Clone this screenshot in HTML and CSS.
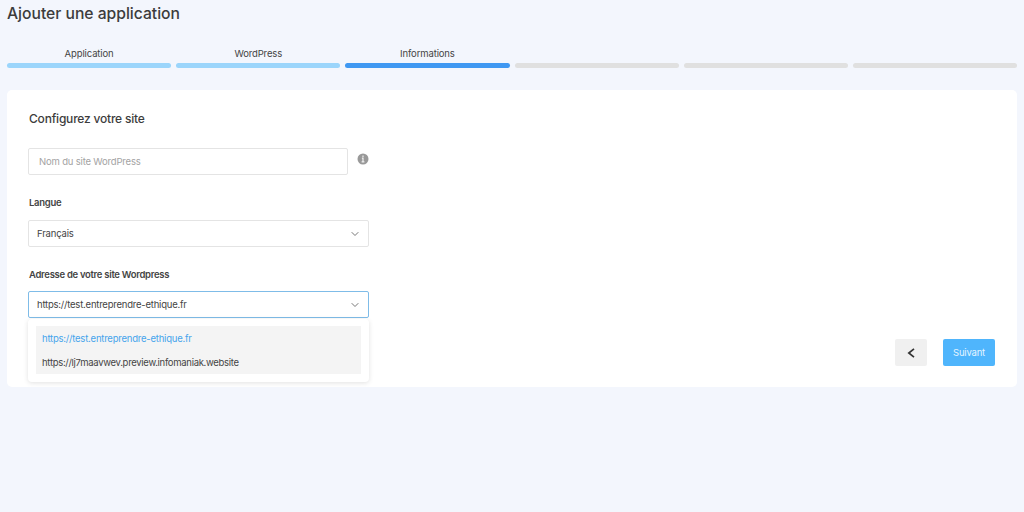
FILE: index.html
```html
<!DOCTYPE html>
<html lang="fr">

<head>
  <meta charset="UTF-8">
  <meta name="viewport" content="width=device-width, initial-scale=1.0">
  <title>Ajouter une application</title>
  <link rel="stylesheet" href="styles.css">
</head>

<body>
  <div class="page">
    <h1>Ajouter une application</h1>

    <!-- Étapes -->
    <ol class="steps">
      <li class="step done"><span>Application</span></li>
      <li class="step done"><span>WordPress</span></li>
      <li class="step current"><span>Informations</span></li>
      <li class="step"></li>
      <li class="step"></li>
      <li class="step"></li>
    </ol>

    <main class="card">
      <form class="site-form">
        <h2>Configurez votre site</h2>

        <div class="name-row">
          <input class="field" type="text" placeholder="Nom du site WordPress">
          <svg class="info" viewBox="0 0 12 12">
            <circle cx="6" cy="6" r="5.5" fill="#999" />
            <path d="M6 2.4v1.5M4.9 5.2H6v3.500M4.600 8.800h2.800" fill="none" stroke="#fff" stroke-opacity="0.850" stroke-width="1.200" />
          </svg>
        </div>

        <div class="label">Langue</div>
        <div class="field select">
          <span>Français</span>
          <svg class="chevron" viewBox="0 0 8 6"><path d="M.7 1.2L4 4.500l3.300-3.300" /></svg>
        </div>

        <div class="label label-address">Adresse de votre site Wordpress</div>
        <div class="field select open">
          <span class="url">https://test.entreprendre-ethique.fr</span>
          <svg class="chevron" viewBox="0 0 8 6"><path d="M.7 1.2L4 4.500l3.300-3.300" /></svg>

          <!-- Liste déroulante -->
          <div class="dropdown">
            <ul class="options">
              <li class="url selected">https://test.entreprendre-ethique.fr</li>
              <li class="url preview">https://lj7maavwev.preview.infomaniak.website</li>
            </ul>
          </div>
        </div>
      </form>

      <div class="actions">
        <button class="btn btn-back" type="button" aria-label="Retour">
          <svg viewBox="0 0 8 10"><path d="M7 .8L1.800 5 7 9.200" /></svg>
        </button>
        <button class="btn btn-next" type="button">Suivant</button>
      </div>
    </main>
  </div>
</body>

</html>
```

FILE: styles.css
```css
* {
  margin: 0;
  padding: 0;
  box-sizing: border-box;
}

body {
  font-family: Inter, 'Liberation Sans', sans-serif;
  font-size: 9.5px;
  line-height: 14px;
  letter-spacing: -0.13px;
  background-color: #f3f6fd;
  color: #444;
}

.page {
  padding: 4px 7px 0;
}

h1 {
  font-size: 15.7px;
  font-weight: 500;
  line-height: 20px;
  letter-spacing: -0.02px;
  color: #3c3c3c;
}

/* Étapes */
.steps {
  display: grid;
  grid-template-columns: repeat(6, 1fr);
  gap: 5px;
  margin-top: 23px;
  list-style: none;
}

.step {
  display: flex;
  flex-direction: column;
  height: 21px;
  text-align: center;
}

.step::after {
  content: '';
  height: 5px;
  margin-top: auto;
  border-radius: 3px;
  background-color: #e0e0e0;
}

.step.done::after {
  background-color: #9bd5fb;
}

.step.current::after {
  background-color: #3f98f2;
}

/* Carte */
.card {
  display: flex;
  justify-content: space-between;
  align-items: flex-end;
  height: 297px;
  margin-top: 22px;
  padding: 21px 22px 21px 21px;
  border-radius: 5px;
  background-color: #fff;
}

.site-form {
  align-self: flex-start;
  width: 341px;
}

h2 {
  padding-left: 1px;
  font-size: 12px;
  font-weight: 500;
  line-height: 16px;
  letter-spacing: -0.2px;
  color: #3c3c3c;
}

.name-row {
  display: flex;
  align-items: flex-start;
  gap: 9px;
  margin-top: 21px;
}

.field {
  width: 100%;
  height: 27px;
  border: 1px solid #e4e4e4;
  border-radius: 2px;
  background-color: #fff;
  font: inherit;
  letter-spacing: -0.18px;
  color: #444;
}

input.field {
  width: 320px;
  padding: 0 10px;
}

input.field::placeholder {
  color: #a3a3a3;
}

.info {
  width: 12px;
  height: 12px;
  margin-top: 5px;
}

.label {
  margin: 21px 0 10px;
  padding-left: 1px;
  font-weight: 600;
  letter-spacing: -0.3px;
}

.label-address {
  margin: 21px 0 9px;
}

.select {
  position: relative;
  display: flex;
  justify-content: space-between;
  align-items: center;
  padding: 0 9px 0 8px;
}

.select.open {
  border-color: #7fbce8;
}

.chevron {
  width: 8px;
  height: 6px;
  fill: none;
  stroke: #777;
  stroke-width: 1;
}

.url {
  letter-spacing: -0.22px;
}

/* Liste déroulante */
.dropdown {
  position: absolute;
  top: 27px;
  left: -1px;
  width: 341px;
  height: 63px;
  padding: 7px 8px;
  border-radius: 4px;
  background-color: #fff;
  box-shadow: 0 1px 5px rgba(0, 0, 0, 0.12);
}

.options {
  list-style: none;
  background-color: #f4f4f4;
}

.options li {
  height: 24px;
  padding-left: 6px;
  line-height: 25px;
}

.options .selected {
  color: #46a4ec;
}

.options .preview {
  letter-spacing: -0.3px;
}

/* Boutons */
.actions {
  display: flex;
  gap: 16px;
}

.btn {
  display: flex;
  justify-content: center;
  align-items: center;
  height: 27px;
  border: none;
  border-radius: 2px;
  font: inherit;
  letter-spacing: -0.2px;
}

.btn-back {
  width: 32px;
  background-color: #f0f0f0;
}

.btn-back svg {
  width: 8px;
  height: 10px;
  fill: none;
  stroke: #333;
  stroke-width: 1.7;
}

.btn-next {
  width: 52px;
  background-color: #4fb5fc;
  color: #e4f4ff;
}
```
